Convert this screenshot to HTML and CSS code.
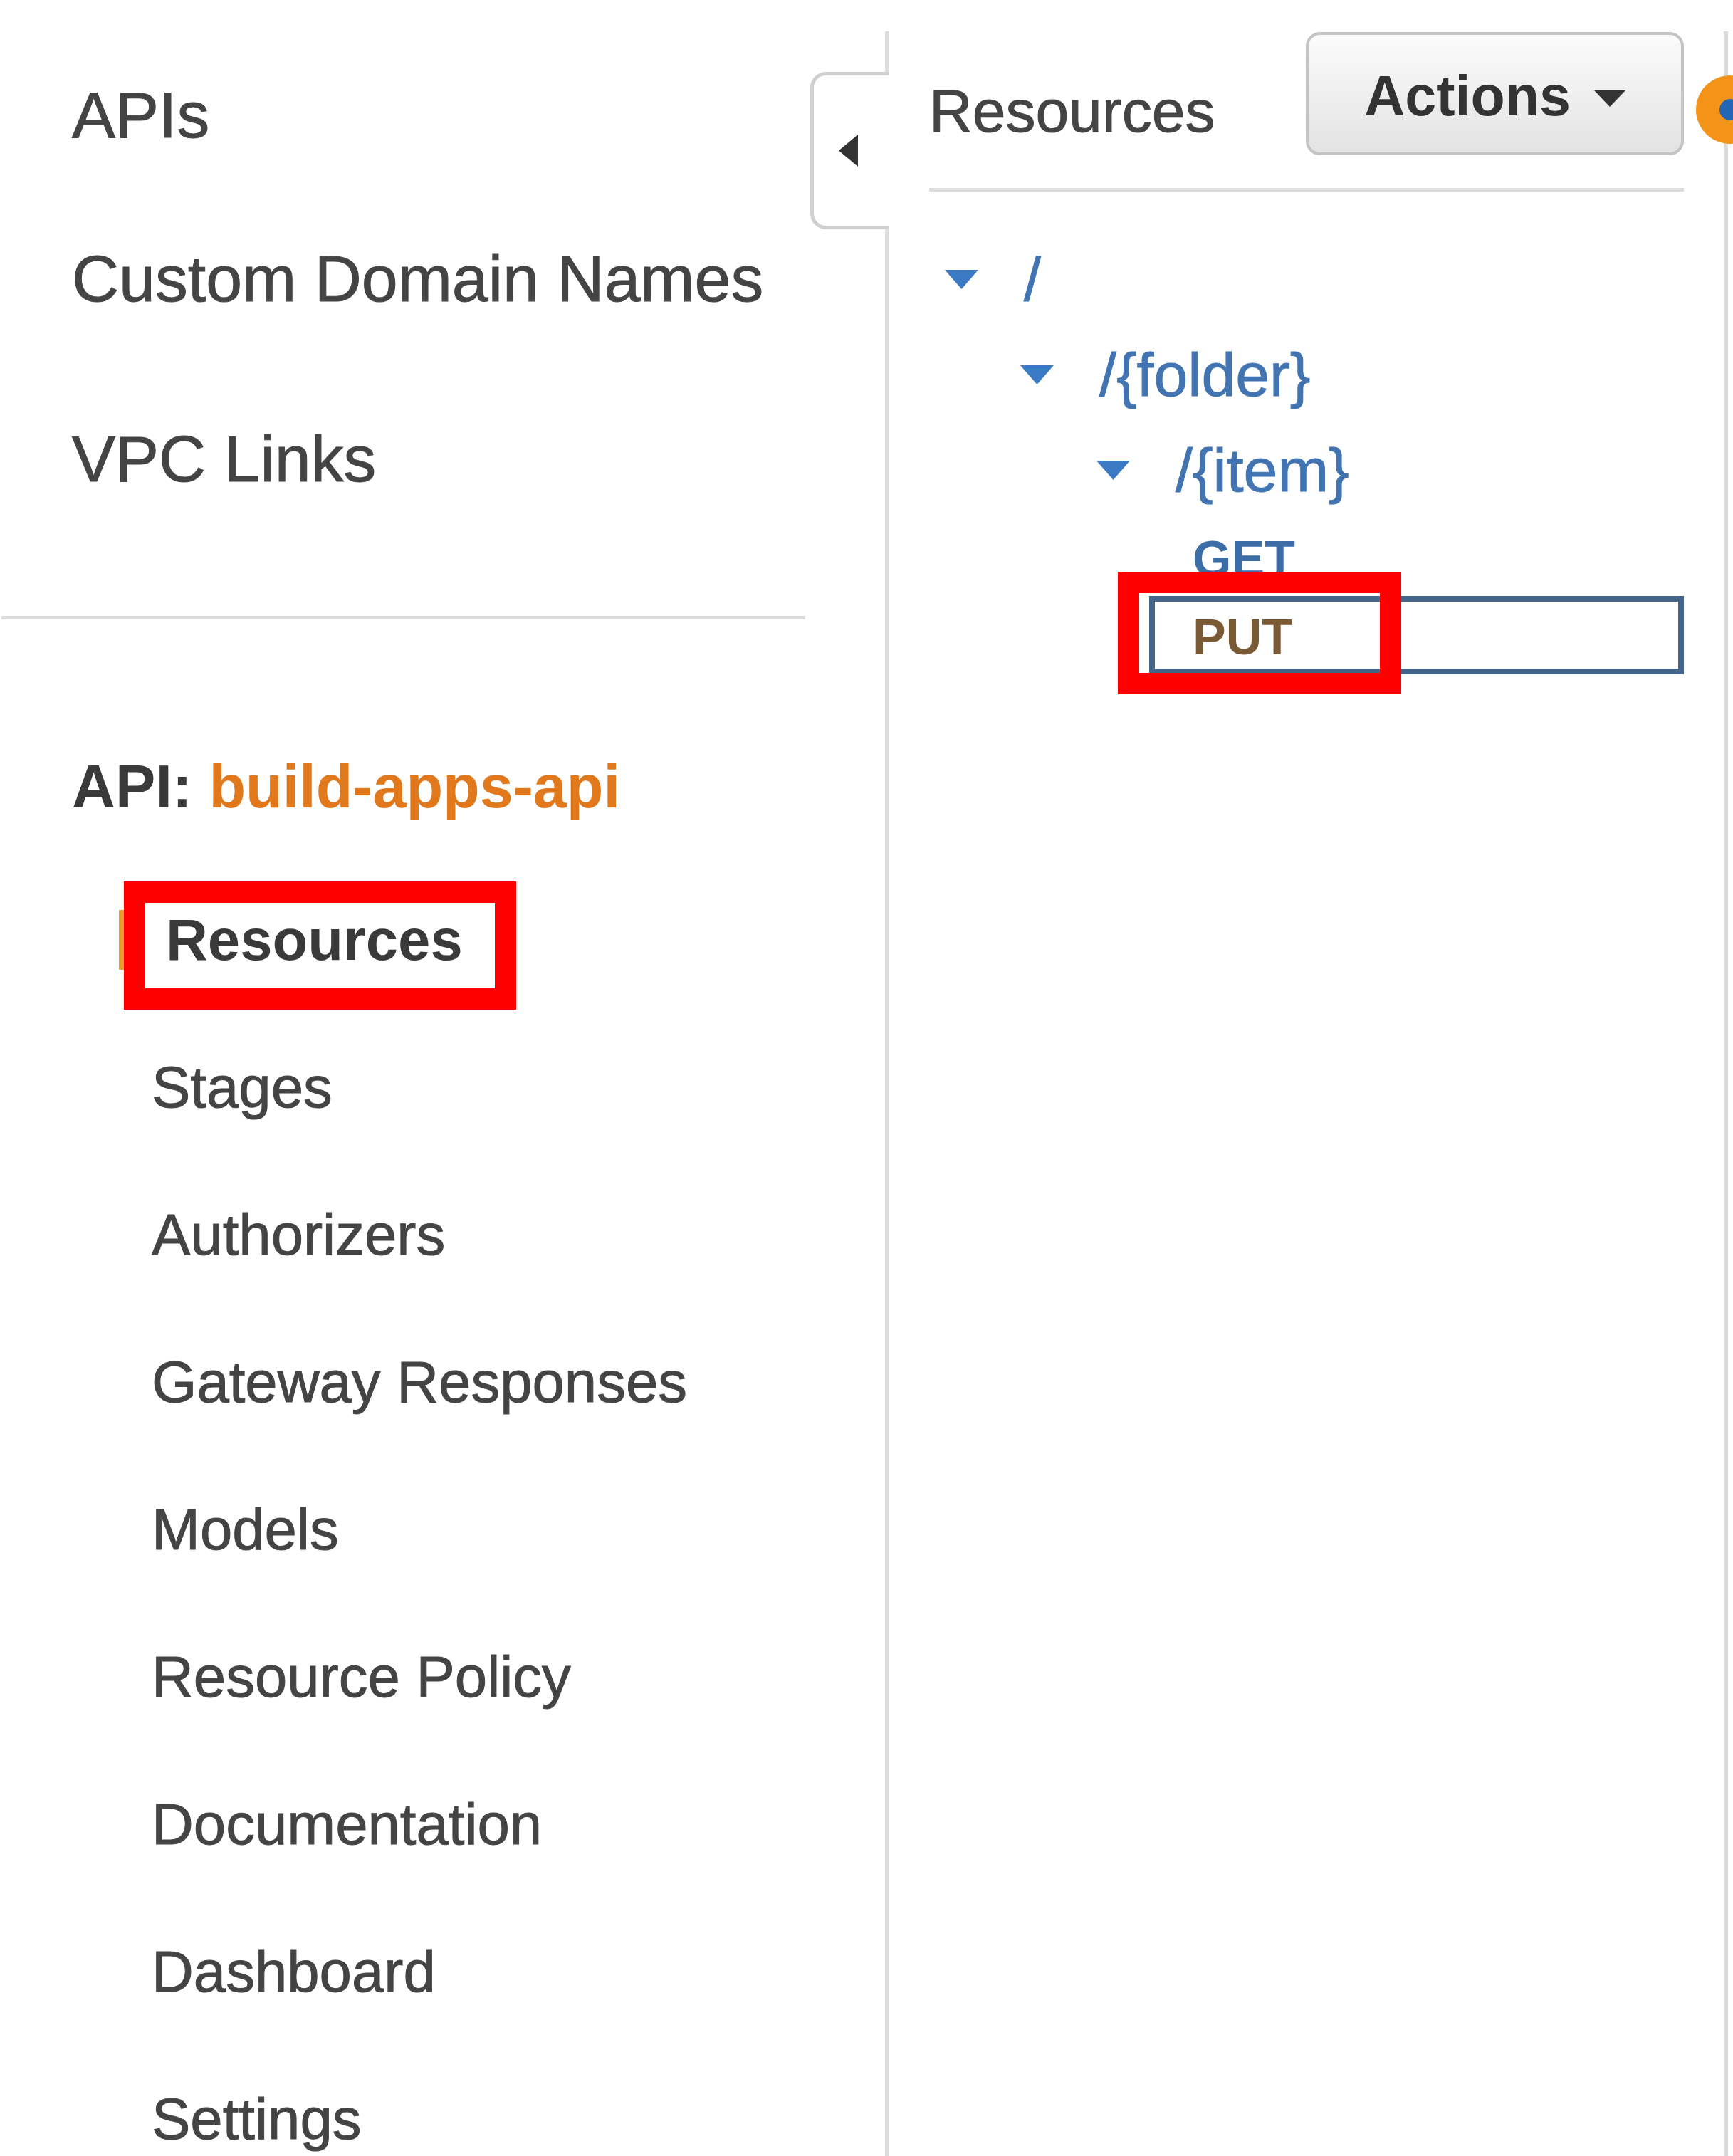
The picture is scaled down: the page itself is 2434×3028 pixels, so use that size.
FILE: index.html
```html
<!DOCTYPE html>
<html lang="en">
<head>
<meta charset="utf-8">
<title>API Gateway - Resources</title>
<link rel="stylesheet" href="styles.css">
</head>
<body>
<div class="page">
  <aside class="sidebar">
    <nav class="nav-top">
      <a class="nav-item">APIs</a>
      <a class="nav-item nav-item--cdn">Custom Domain Names</a>
      <a class="nav-item nav-item--vpc">VPC Links</a>
    </nav>
    <div class="divider"></div>
    <div class="api-title"><span class="api-label">API:</span> <span class="api-name">build-apps-api</span></div>
    <nav class="sub-nav">
      <a class="sub-item sub-item--active"><span class="active-bar"></span><span class="sub-text">Resources</span><span class="annot annot--resources"></span></a>
      <a class="sub-item">Stages</a>
      <a class="sub-item">Authorizers</a>
      <a class="sub-item">Gateway Responses</a>
      <a class="sub-item">Models</a>
      <a class="sub-item">Resource Policy</a>
      <a class="sub-item">Documentation</a>
      <a class="sub-item">Dashboard</a>
      <a class="sub-item">Settings</a>
    </nav>
  </aside>

  <main class="main">
    <div class="collapse-tab">
      <svg width="27" height="45" viewBox="0 0 27 45"><path d="M27 0 L0 22.5 L27 45 Z" fill="#333"/></svg>
    </div>
    <header class="main-header">
      <h2 class="main-title">Resources</h2>
      <div class="actions-btn">
        <span>Actions</span>
        <svg class="caret" width="44" height="23" viewBox="0 0 44 23"><path d="M0 0 H44 L22 23 Z" fill="#333"/></svg>
      </div>
    </header>
    <div class="main-divider"></div>
    <ul class="tree">
      <li class="tree-row lvl0">
        <svg class="tri" width="47" height="27" viewBox="0 0 47 27"><path d="M0 0 H47 L23.5 27 Z" fill="#3b7bc6"/></svg>
        <span class="tree-text">/</span>
      </li>
      <li class="tree-row lvl1">
        <svg class="tri" width="47" height="27" viewBox="0 0 47 27"><path d="M0 0 H47 L23.5 27 Z" fill="#3b7bc6"/></svg>
        <span class="tree-text">/{folder}</span>
      </li>
      <li class="tree-row lvl2">
        <svg class="tri" width="47" height="27" viewBox="0 0 47 27"><path d="M0 0 H47 L23.5 27 Z" fill="#3b7bc6"/></svg>
        <span class="tree-text">/{item}</span>
      </li>
      <li class="method-row method-row--get">GET</li>
      <li class="method-row method-row--selected">PUT<span class="annot annot--put"></span></li>
    </ul>
  </main>

  <div class="edge"></div>
  <span class="status-dot"><span class="status-core"></span></span>
</div>
</body>
</html>
```

FILE: styles.css
```css
* { box-sizing: border-box; }

html, body {
  margin: 0;
  padding: 0;
  background: #fff;
  height: 3028px;
  overflow: hidden;
}

body {
  font-family: "Liberation Sans", Arial, Helvetica, sans-serif;
  color: #444;
}

.page {
  position: relative;
  display: grid;
  grid-template-columns: 1243px 1184px 7px;
  height: 3028px;
  overflow: hidden;
}

/* ---------- Sidebar ---------- */
.sidebar {
  display: flex;
  flex-direction: column;
}

.nav-top {
  display: flex;
  flex-direction: column;
  padding-top: 111px;
}

.nav-item {
  display: block;
  height: 100px;
  line-height: 100px;
  font-size: 91.5px;
  padding-left: 101px;
  color: #444;
  white-space: nowrap;
  -webkit-text-stroke: 1px #444;
}

.nav-item--cdn { margin-top: 130px; }
.nav-item--vpc { margin-top: 153px; }

.divider {
  margin-top: 171px;
  margin-left: 2px;
  width: 1129px;
  height: 5px;
  background: #dcdcdc;
}

.api-title {
  margin-top: 185px;
  height: 100px;
  line-height: 100px;
  font-size: 84.5px;
  font-weight: bold;
  padding-left: 101px;
  white-space: nowrap;
}

.api-label { color: #3a3a3a; }
.api-name { color: #e2781c; }

.sub-nav {
  display: flex;
  flex-direction: column;
  margin-top: 61px;
}

.sub-item {
  position: relative;
  display: flex;
  align-items: center;
  height: 207px;
  flex: none;
  line-height: 100px;
  font-size: 81.5px;
  padding-left: 213px;
  color: #444;
  white-space: nowrap;
  -webkit-text-stroke: 1px #444;
}

.sub-item--active {
  padding-left: 167px;
  font-weight: bold;
  color: #3a3a3a;
  -webkit-text-stroke: 0;
}

.active-bar {
  width: 10px;
  height: 84px;
  background: #ec9a2a;
  margin-right: 56px;
  flex: none;
}

/* annotation boxes (drawn over the UI) */
.annot {
  position: absolute;
  border: 30px solid #ff0000;
  pointer-events: none;
}

.annot--resources {
  top: 22px;
  left: 174px;
  width: 551px;
  height: 180px;
}

/* ---------- Main panel ---------- */
.main {
  position: relative;
  margin-top: 44px;
  border-left: 5px solid #dcdcdc;
  border-right: 6px solid #dcdcdc;
  padding: 1px 56px 0 57px;
}

.collapse-tab {
  position: absolute;
  left: -110px;
  top: 57px;
  width: 110px;
  height: 221px;
  background: #fff;
  border: 5px solid #cfcfcf;
  border-right: none;
  border-radius: 22px 0 0 22px;
  display: flex;
  align-items: center;
  padding-left: 35px;
  z-index: 2;
}

.main-header {
  display: flex;
  justify-content: space-between;
  align-items: flex-start;
}

.main-title {
  margin: 61px 0 0 0;
  height: 100px;
  line-height: 100px;
  font-size: 84px;
  font-weight: normal;
  color: #444;
  -webkit-text-stroke: 1px #444;
}

.actions-btn {
  width: 531px;
  height: 173px;
  border: 4px solid #c4c4c4;
  border-radius: 20px;
  background: linear-gradient(#fbfbfb, #e3e3e3);
  display: flex;
  align-items: center;
  justify-content: center;
  gap: 33px;
  padding-top: 6px;
  font-size: 79px;
  font-weight: bold;
  color: #333;
  line-height: 100px;
}

.caret {
  flex: none;
  margin-top: 8px;
}

.main-divider {
  margin-top: 46px;
  height: 5px;
  background: #dcdcdc;
}

.tree {
  list-style: none;
  margin: 56px 0 0 0;
  padding: 0;
}

.tree-row {
  display: flex;
  align-items: center;
  height: 134px;
  line-height: 100px;
  font-size: 86px;
  color: #4274b2;
  white-space: nowrap;
  -webkit-text-stroke: 1px #4274b2;
}

.tri { flex: none; margin-right: 64px; }

.lvl0 { padding-left: 22px; }
.lvl1 { padding-left: 128px; }
.lvl2 { padding-left: 235px; }

.method-row {
  position: relative;
  height: 110px;
  margin-left: 309px;
  border: 8px solid transparent;
  padding: 5px 0 0 53px;
  line-height: 90px;
  font-size: 70px;
  font-weight: bold;
}

.method-row--get { color: #3d6da7; }

.method-row--selected {
  border-color: #45648b;
  color: #7a5a35;
}

.annot--put {
  top: -42px;
  left: -52px;
  width: 398px;
  height: 172px;
}

/* ---------- Right edge ---------- */
.edge { background: #fff; }

.status-dot {
  position: absolute;
  left: 2382px;
  top: 106px;
  width: 96px;
  height: 96px;
  border-radius: 50%;
  background: #f39419;
  display: flex;
  align-items: center;
  justify-content: center;
}

.status-core {
  width: 30px;
  height: 30px;
  border-radius: 50%;
  background: #2266b5;
}
```
